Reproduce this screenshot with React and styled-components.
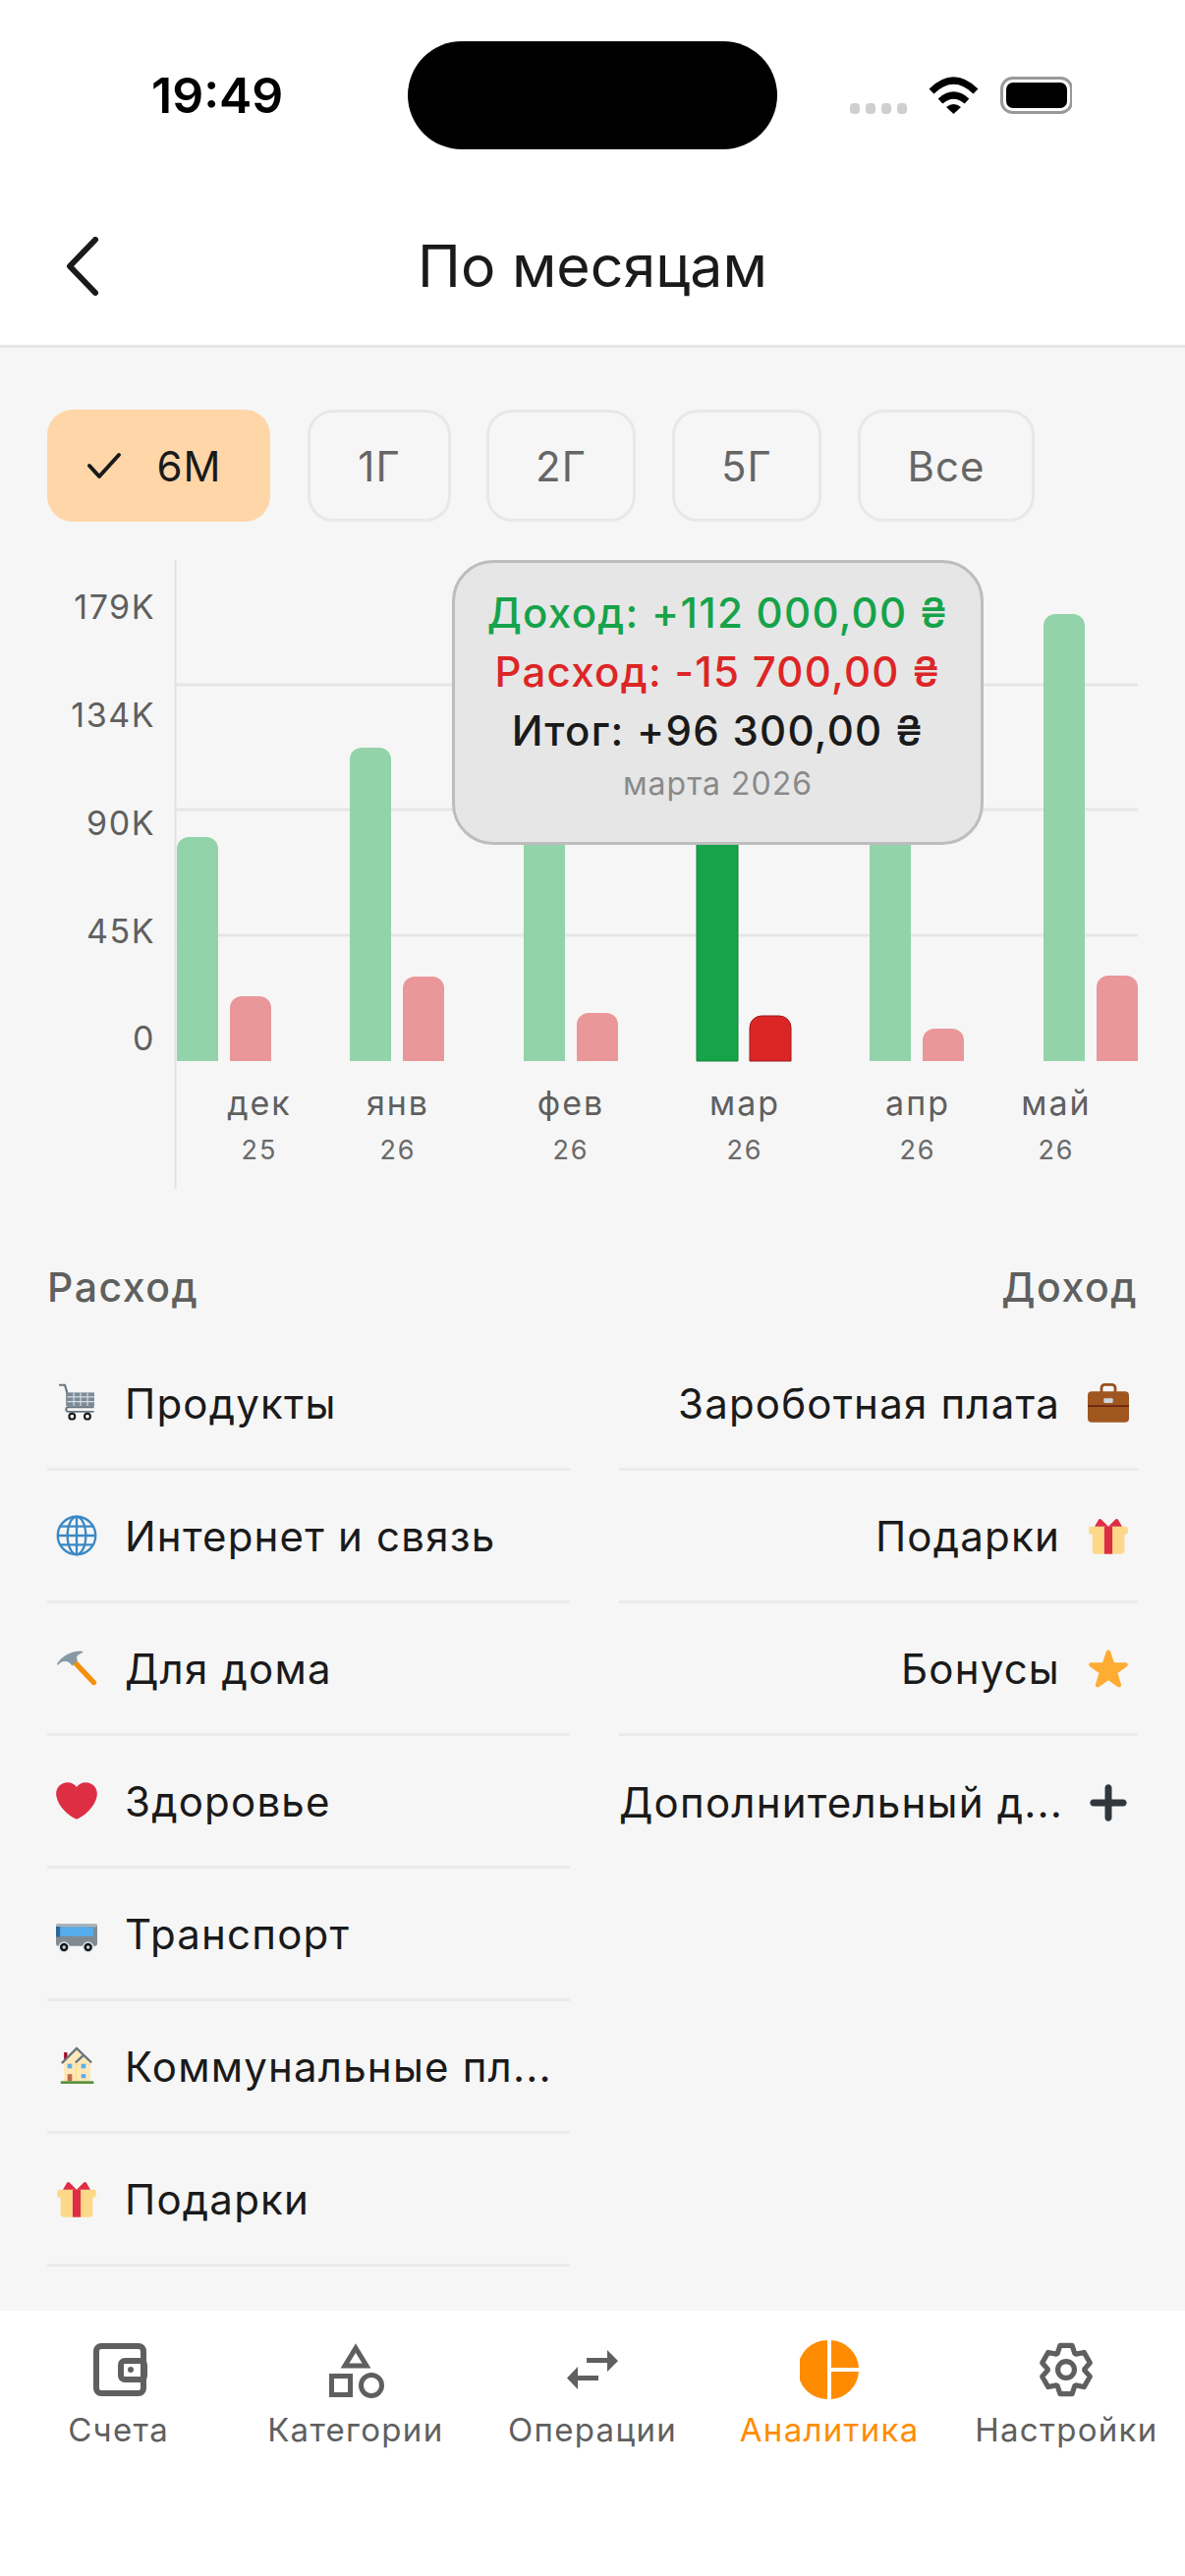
import React from 'react';
import styled, { createGlobalStyle } from 'styled-components';

const Global = createGlobalStyle`
  html, body { margin: 0; padding: 0; background: #fff; }
  * { box-sizing: border-box; }
`;

const Screen = styled.div`
  width: 1206px;
  height: 2622px;
  display: flex;
  flex-direction: column;
  background: #fff;
  font-family: Inter, "Noto Sans", sans-serif;
  overflow: hidden;
`;

const StatusBar = styled.div`
  height: 190px;
  padding: 42px 0 0 154px;
  display: flex;
  align-items: flex-start;
`;

const Time = styled.div`
  width: 261px;
  height: 110px;
  line-height: 110px;
  font-size: 50px;
  font-weight: 600;
  color: #000;
`;

const Island = styled.div`
  width: 376px;
  height: 110px;
  border-radius: 55px;
  background: #000;
`;

const StatusIcons = styled.svg`
  display: block;
  margin: 28px 0 0 60px;
`;

const Header = styled.div`
  height: 164px;
  padding-left: 64px;
  display: flex;
  align-items: center;
  position: relative;
  border-bottom: 3px solid #e6e6e6;
`;

const Title = styled.div`
  position: absolute;
  left: 0;
  right: 0;
  top: 46px;
  text-align: center;
  font-size: 59px;
  line-height: 70px;
  font-weight: 400;
  color: #1a1a1a;
`;

const Content = styled.div`
  flex: 1;
  min-height: 0;
  background: #f6f6f6;
  padding-top: 63px;
  overflow: hidden;
`;

const Chips = styled.div`
  display: flex;
  padding-left: 48px;
`;

const Chip = styled.div`
  width: ${p => p.$w}px;
  margin-right: ${p => p.$gap}px;
  height: 114px;
  border-radius: 26px;
  display: flex;
  align-items: center;
  justify-content: center;
  gap: 36px;
  padding-right: ${p => (p.$active ? '10px' : '0')};
  font-size: 42px;
  letter-spacing: 1px;
  color: ${p => (p.$active ? '#1a1a1a' : '#666')};
  background: ${p => (p.$active ? '#ffd6a8' : 'transparent')};
  border: ${p => (p.$active ? 'none' : '3px solid #e8e8e8')};
`;

const ChartArea = styled.div`
  position: relative;
  height: 660px;
  margin-top: 29px;
`;

const ChartSvg = styled.svg`
  display: block;
`;

const AxisText = styled.text`
  font-family: Inter, sans-serif;
  font-size: ${p => p.$size}px;
  letter-spacing: ${p => p.$spacing || 1.5}px;
  fill: ${p => p.$color || '#5f5f5f'};
  text-anchor: ${p => p.$anchor || 'middle'};
`;

const Tooltip = styled.div`
  position: absolute;
  left: 460px;
  top: 10px;
  width: 541px;
  height: 290px;
  border-radius: 42px;
  background: #e6e6e6;
  border: 3px solid #bdbdbd;
  padding-top: 21px;
  text-align: center;
`;

const TipLine = styled.div`
  font-size: 42px;
  line-height: 60px;
  font-weight: 500;
  letter-spacing: 1.3px;
  color: ${p => p.$color};
`;

const TipDate = styled.div`
  margin-top: 2px;
  font-size: 32px;
  line-height: 44px;
  letter-spacing: 1px;
  color: #8a8a8a;
`;

const Columns = styled.div`
  display: grid;
  grid-template-columns: 532px 528px;
  column-gap: 50px;
  padding: 60px 48px 0;
`;

const ColTitle = styled.div`
  height: 60px;
  line-height: 60px;
  margin-bottom: 22px;
  font-size: 41px;
  font-weight: 500;
  letter-spacing: 1.5px;
  color: #5f5f5f;
  text-align: ${p => (p.$right ? 'right' : 'left')};
`;

const Row = styled.div`
  height: 135px;
  display: flex;
  flex-direction: ${p => (p.$right ? 'row-reverse' : 'row')};
  align-items: center;
  gap: 19px;
  border-bottom: 3px solid #ebebeb;
  &:last-child {
    border-bottom: ${p => (p.$noLine ? 'none' : '3px solid #ebebeb')};
  }
`;

const IconBox = styled.div`
  flex: none;
  width: 60px;
  display: flex;
  justify-content: center;
`;

const RowText = styled.div`
  flex: 1;
  min-width: 0;
  font-size: 42px;
  font-weight: 400;
  letter-spacing: 1.2px;
  color: #1a1a1a;
  white-space: nowrap;
  text-align: ${p => (p.$right ? 'right' : 'left')};
`;

const TabBar = styled.div`
  height: 270px;
  flex: none;
  display: grid;
  grid-template-columns: repeat(5, 1fr);
  background: #fff;
  padding-top: 30px;
`;

const Tab = styled.div`
  display: flex;
  flex-direction: column;
  align-items: center;
  color: ${p => (p.$active ? '#ff8c00' : '#5f5f5f')};
`;

const TabIcon = styled.div`
  width: 60px;
  height: 60px;
  display: flex;
  align-items: center;
  justify-content: center;
`;

const TabLabel = styled.div`
  margin-top: 13px;
  font-size: 33px;
  line-height: 36px;
  letter-spacing: 1.3px;
  white-space: nowrap;
`;

const E = ({ children }) => (
  <svg width="42" height="42" viewBox="0 0 36 36">{children}</svg>
);

const Cart = () => (
  <E>
    <path d="M2.600 2.300h5.100l2 6.600v11.400" fill="none" stroke="#66757f" strokeWidth="1.800" />
    <rect x="9.700" y="8.900" width="23.700" height="12" fill="#7b8b97" />
    <path d="M9.700 12.800h23.700M9.700 16.800h23.700M15.500 8.900v12M21.500 8.900v12M27.500 8.900v12" stroke="#d5dde2" strokeWidth="1" />
    <path d="M33 21.600H11c-3 0-3 4 0 4h22" fill="none" stroke="#66757f" strokeWidth="1.600" />
    <circle cx="14" cy="29.700" r="2.500" fill="#fff" stroke="#14181b" strokeWidth="1.800" />
    <circle cx="27.400" cy="29.700" r="2.500" fill="#fff" stroke="#14181b" strokeWidth="1.800" />
  </E>
);

const Globe = () => (
  <E>
    <g fill="none" stroke="#3b88c3" strokeWidth="2">
      <circle cx="18" cy="18" r="16.500" />
      <ellipse cx="18" cy="18" rx="8" ry="16.500" />
      <path d="M18 1.500v33M1.500 18h33M4 10h28M4 26h28" />
    </g>
  </E>
);

const Hammer = () => (
  <E>
    <path d="M15 11.500L33 30.500" fill="none" stroke="#f4900c" strokeWidth="4.500" strokeLinecap="round" />
    <path d="M1 14C5 8 12 3 22 3l2 1c-6 2-7 5-5 7l-5 5c-2-4-8-6-12-1-.600.500-1.300-.300-1-1z" fill="#8899a6" />
  </E>
);

const Heart = () => (
  <E>
    <path fill="#dd2e44" d="M35.885 11.833c0-5.45-4.418-9.868-9.867-9.868-3.308 0-6.227 1.633-8.018 4.129-1.791-2.496-4.71-4.129-8.017-4.129-5.45 0-9.868 4.417-9.868 9.868 0 .772.098 1.52.266 2.241C1.751 22.587 11.216 31.568 18 34.034c6.783-2.466 16.249-11.447 17.617-19.959.17-.721.268-1.469.268-2.242z" />
  </E>
);

const Bus = () => (
  <E>
    <rect x="0" y="9.400" width="36" height="19.600" rx="2.500" fill="#808a90" />
    <rect x="0" y="9.400" width="36" height="3" rx="1.500" fill="#a9b3ba" />
    <rect x="3.500" y="12.400" width="29" height="8" fill="#55acee" />
    <rect x="0" y="12" width="3.500" height="9" fill="#2a6797" />
    <circle cx="7" cy="30" r="5" fill="#e1e8ed" />
    <circle cx="7" cy="30" r="3.600" fill="#14181b" />
    <circle cx="7" cy="30" r="1.500" fill="#ccd6dd" />
    <circle cx="28" cy="30" r="5" fill="#e1e8ed" />
    <circle cx="28" cy="30" r="3.600" fill="#14181b" />
    <circle cx="28" cy="30" r="1.500" fill="#ccd6dd" />
  </E>
);

const House = () => (
  <E>
    <rect x="7" y="6" width="2.800" height="7" fill="#a0041e" />
    <path d="M7 14L18 3l12 11v17H7z" fill="#ffe8b6" />
    <path d="M17.500 15v16" stroke="#ffd983" strokeWidth="1" />
    <path d="M5 15.500L18 2.500l13 12.500M17 15l7-6.500" fill="none" stroke="#66757f" strokeWidth="2" />
    <rect x="10" y="25" width="4" height="6" fill="#c1694f" />
    <rect x="10" y="16" width="4" height="4" fill="#5dadec" />
    <rect x="22" y="16" width="4" height="4" fill="#5dadec" />
    <rect x="22" y="25" width="4" height="3.500" fill="#5dadec" />
    <rect x="4" y="31" width="29" height="2.500" rx="1" fill="#5c913b" />
  </E>
);

const Gift = () => (
  <E>
    <path d="M4 14h28v17a3 3 0 0 1-3 3H7a3 3 0 0 1-3-3z" fill="#fdd888" />
    <rect x="1" y="10" width="34" height="7" rx="2" fill="#fdd888" />
    <rect x="14.500" y="10" width="7" height="24" fill="#dd2e44" />
    <path d="M6 10l3.500-6c.8-1 1.800-.6 2.500 0l6 6 6-6c.7-.6 1.700-1 2.500 0L30 10z" fill="#dd2e44" />
  </E>
);

const Briefcase = () => (
  <E>
    <path d="M12 9V5a3 3 0 0 1 3-3h6a3 3 0 0 1 3 3v4" fill="none" stroke="#9a4e1c" strokeWidth="2.400" />
    <rect x="0" y="8" width="36" height="27" rx="3.500" fill="#a0571f" />
    <rect x="0" y="20" width="36" height="1.400" fill="#662113" />
    <rect x="14" y="14" width="8" height="4" rx=".8" fill="#ccd6dd" />
  </E>
);

const Star = () => (
  <E>
    <path fill="#ffac33" d="M27.287 34.627c-.404 0-.806-.124-1.152-.371L18 28.422l-8.135 5.834c-.693.496-1.623.496-2.312-.008-.689-.499-.979-1.385-.721-2.194l3.034-9.792-8.062-5.681c-.685-.505-.97-1.393-.708-2.203.264-.808 1.016-1.357 1.866-1.363L12.947 13l3.179-9.549c.268-.809 1.023-1.353 1.874-1.353.851 0 1.606.545 1.875 1.353L23 13l10.036.015c.853.006 1.606.556 1.867 1.363.263.81-.022 1.698-.708 2.203l-8.062 5.681 3.034 9.792c.26.809-.033 1.695-.72 2.194-.347.254-.753.379-1.16.379z" />
  </E>
);

const Plus = () => (
  <E>
    <path fill="#31373d" d="M31 15H21V5c0-1.657-1.343-3-3-3s-3 1.343-3 3v10H5c-1.657 0-3 1.343-3 3s1.343 3 3 3h10v10c0 1.657 1.343 3 3 3s3-1.343 3-3V21h10c1.657 0 3-1.343 3-3s-1.343-3-3-3z" />
  </E>
);

const WalletIcon = () => (
  <svg width="60" height="60" viewBox="0 0 60 60" fill="none" stroke="currentColor" strokeWidth="6">
    <rect x="7" y="6" width="48" height="48" rx="5" />
    <rect x="32" y="21" width="24" height="19" rx="4" />
    <circle cx="42" cy="30" r="3" fill="currentColor" stroke="none" />
  </svg>
);

const ShapesIcon = () => (
  <svg width="60" height="60" viewBox="0 0 60 60" fill="none" stroke="currentColor" strokeWidth="5">
    <path d="M30 8l11 18H19z" />
    <rect x="5.500" y="36.500" width="19" height="19" />
    <circle cx="46" cy="46" r="10.500" />
  </svg>
);

const SwapIcon = () => (
  <svg width="60" height="60" viewBox="0 0 60 60" fill="currentColor">
    <path d="M24 18h21v-8l11 11-11 11v-9H24z" />
    <path d="M36 36H15v-9L4 38.500 15 50v-9h21z" />
  </svg>
);

const PieIcon = () => (
  <svg width="60" height="60" viewBox="0 0 60 60" fill="currentColor">
    <path d="M28 0A30 30 0 0 0 28 60z" />
    <path d="M32 0A30 30 0 0 1 60 28H32z" />
    <path d="M32 32H60A30 30 0 0 1 32 60z" />
  </svg>
);

// шестерёнка с шестью зубцами
const gearPath = (() => {
  const pt = (rad, deg) => {
    const a = (deg * Math.PI) / 180;
    return `${(32 + rad * Math.cos(a)).toFixed(2)} ${(32 + rad * Math.sin(a)).toFixed(2)}`;
  };
  let d = '';
  for (let i = 0; i < 6; i++) {
    const c = -90 + i * 60;
    const pts = [[20, c - 28], [27, c - 14], [27, c + 14], [20, c + 28]];
    pts.forEach(([r, a], j) => {
      d += `${i === 0 && j === 0 ? 'M' : 'L'}${pt(r, a)}`;
    });
  }
  return `${d}z`;
})();

const GearIcon = () => (
  <svg width="64" height="64" viewBox="0 0 64 64" fill="none" stroke="currentColor" strokeWidth="5.500" strokeLinejoin="round">
    <path d={gearPath} />
    <circle cx="32" cy="32" r="9" />
  </svg>
);

const months = [
  { x: 180, inc: 852, exp: 1014, label: 'дек', yr: '25', lx: 264 },
  { x: 356, inc: 761, exp: 994, label: 'янв', yr: '26', lx: 405 },
  { x: 533, inc: 830, exp: 1031, label: 'фев', yr: '26', lx: 581 },
  { x: 709, inc: 830, exp: 1034, label: 'мар', yr: '26', lx: 758, active: true },
  { x: 885, inc: 830, exp: 1047, label: 'апр', yr: '26', lx: 934 },
  { x: 1062, inc: 625, exp: 993, label: 'май', yr: '26', lx: 1075 },
];

const BASE = 1080;
const ticks = [['179K', 618], ['134K', 728], ['90K', 838], ['45K', 948], ['0', 1057]];

// столбик со скруглённым верхом
const barPath = (x, top) =>
  `M${x} ${BASE}V${top + 12}a12 12 0 0 1 12-12h18a12 12 0 0 1 12 12V${BASE}z`;

function Chart() {
  return (
    <ChartSvg width="1206" height="660" viewBox="0 560 1206 660">
      <path d="M178.500 570V1210" stroke="#e2e2e2" strokeWidth="2" />
      {[697, 824, 952].map(y => (
        <path key={y} d={`M178 ${y}H1158`} stroke="#e6e6e6" strokeWidth="3" />
      ))}
      {ticks.map(([t, y]) => (
        <AxisText key={t} x="158" y={y + 12} $size={34} $anchor="end">{t}</AxisText>
      ))}
      {months.map(m => (
        <g key={m.label}>
          <path d={barPath(m.x, m.inc)} fill={m.active ? '#16a34a' : '#93d3aa'} stroke={m.active ? '#15803d' : 'none'} />
          <path d={barPath(m.x + 54, m.exp)} fill={m.active ? '#dc2626' : '#ea9799'} stroke={m.active ? '#991b1b' : 'none'} />
          <AxisText x={m.lx} y={1135} $size={34} $spacing={2}>{m.label}</AxisText>
          <AxisText x={m.lx} y={1180} $size={27} $spacing={2} $color="#6a6a6a">{m.yr}</AxisText>
        </g>
      ))}
    </ChartSvg>
  );
}

const spending = [
  [Cart, 'Продукты'],
  [Globe, 'Интернет и связь'],
  [Hammer, 'Для дома'],
  [Heart, 'Здоровье'],
  [Bus, 'Транспорт'],
  [House, 'Коммунальные пл...'],
  [Gift, 'Подарки'],
];

const income = [
  [Briefcase, 'Зароботная плата'],
  [Gift, 'Подарки'],
  [Star, 'Бонусы'],
  [Plus, 'Дополнительный д...'],
];

const tabs = [
  [<WalletIcon />, 'Счета'],
  [<ShapesIcon />, 'Категории'],
  [<SwapIcon />, 'Операции'],
  [<PieIcon />, 'Аналитика', true],
  [<GearIcon />, 'Настройки'],
];

export default function App() {
  return (
    <Screen>
      <Global />
      <StatusBar>
        <Time>19:49</Time>
        <Island />
        <StatusIcons width="240" height="80" viewBox="851 70 240 80">
          <g fill="#cfcfcf">
            <rect x="865" y="105" width="10" height="11" rx="4" />
            <rect x="881" y="105" width="10" height="11" rx="4" />
            <rect x="897" y="105" width="10" height="11" rx="4" />
            <rect x="913" y="105" width="10" height="11" rx="4" />
          </g>
          <path d="M948 93Q970.500 71 993 93" fill="none" stroke="#000" strokeWidth="7" />
          <path d="M957 103Q970.500 91 984 103" fill="none" stroke="#000" strokeWidth="7" />
          <path d="M963 109Q970.500 103 978 109L970.500 116z" fill="#000" />
          <rect x="1019.500" y="79.500" width="71" height="35" rx="11" fill="none" stroke="#999" strokeWidth="3" />
          <rect x="1024" y="84" width="62" height="26" rx="7" fill="#000" />
          <path d="M1094 92c3 1 4 3 4 5s-1 4-4 5z" fill="#999" />
        </StatusIcons>
      </StatusBar>
      <Header>
        <svg width="40" height="60" viewBox="0 0 40 60" fill="none" stroke="#1a1a1a" strokeWidth="6" strokeLinecap="round" strokeLinejoin="round">
          <path d="M33 3L7 30l26 27" />
        </svg>
        <Title>По месяцам</Title>
      </Header>
      <Content>
        <Chips>
          <Chip $active $w={227} $gap={38}>
            <svg width="36" height="28" viewBox="0 0 36 28" fill="none" stroke="#1a1a1a" strokeWidth="4" strokeLinecap="round" strokeLinejoin="round">
              <path d="M3 14l10 11L33 3" />
            </svg>
            <span>6М</span>
          </Chip>
          <Chip $w={146} $gap={36}>1Г</Chip>
          <Chip $w={152} $gap={37}>2Г</Chip>
          <Chip $w={152} $gap={37}>5Г</Chip>
          <Chip $w={180} $gap={0}>Все</Chip>
        </Chips>
        <ChartArea>
          <Chart />
          <Tooltip>
            <TipLine $color="#16a34a">Доход: +112 000,00 ₴</TipLine>
            <TipLine $color="#dc2626">Расход: -15 700,00 ₴</TipLine>
            <TipLine $color="#1a1a1a">Итог: +96 300,00 ₴</TipLine>
            <TipDate>марта 2026</TipDate>
          </Tooltip>
        </ChartArea>
        <Columns>
          <div>
            <ColTitle>Расход</ColTitle>
            {spending.map(([Ico, name]) => (
              <Row key={name}>
                <IconBox><Ico /></IconBox>
                <RowText>{name}</RowText>
              </Row>
            ))}
          </div>
          <div>
            <ColTitle $right>Доход</ColTitle>
            {income.map(([Ico, name], i) => (
              <Row key={name} $right $noLine={i === income.length - 1}>
                <IconBox><Ico /></IconBox>
                <RowText $right>{name}</RowText>
              </Row>
            ))}
          </div>
        </Columns>
      </Content>
      <TabBar>
        {tabs.map(([icon, label, active]) => (
          <Tab key={label} $active={active}>
            <TabIcon>{icon}</TabIcon>
            <TabLabel>{label}</TabLabel>
          </Tab>
        ))}
      </TabBar>
    </Screen>
  );
}
